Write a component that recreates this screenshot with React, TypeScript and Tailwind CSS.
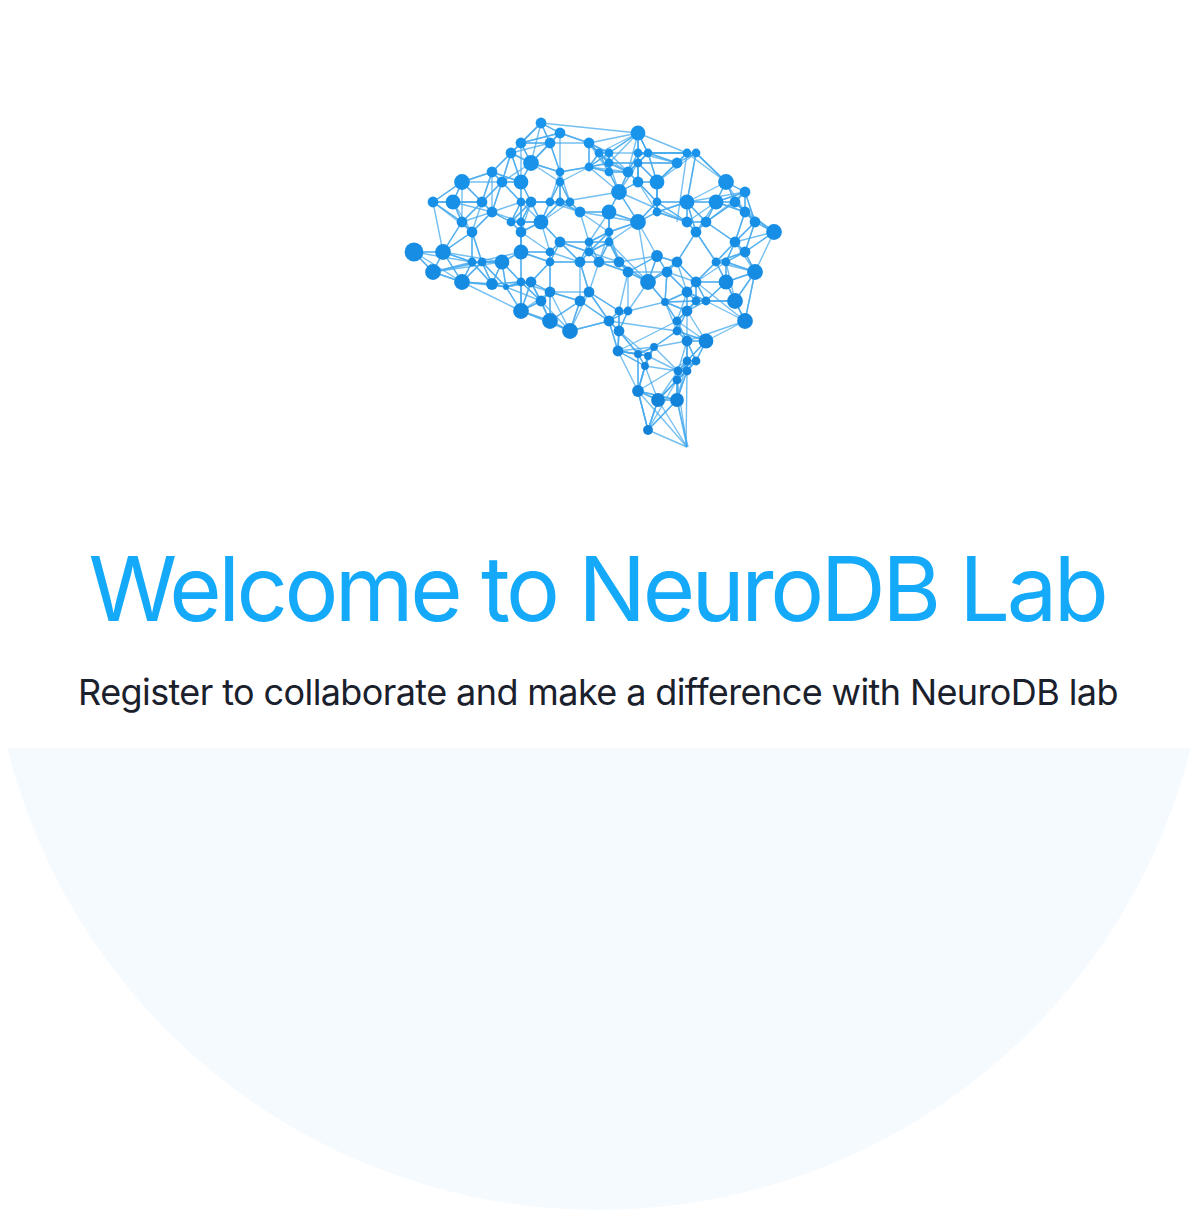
const nodes: number[][] = [
  [541,123,5],[560,133,5],[521,143,5],[550,143,5],[589,143,5],[511,153,5],[531,163,7.5],[589,167,4],[492,172,5],[560,172,4],
  [462,182,7.5],[502,182,5],[521,182,7],[560,182,4],[433,202,5],[453,202,7],[482,202,5],[521,202,4],[531,202,5],[550,202,4],
  [560,202,4],[570,202,4],[580,212,5],[492,212,5],[462,222,5],[511,222,4],[521,222,4],[541,222,7],
  [638,133,7],[599,153,4],[609,153,4],[638,153,4],[648,153,4],[687,153,4],[696,153,4],[677,163,5],[609,163,4],[638,163,4],
  [609,172,4],[628,172,5],[638,182,5],[657,182,7],[726,182,7.5],[745,192,5],[619,192,7.5],[657,202,4],[687,202,7],[716,202,7],
  [735,202,5],[609,212,7],[638,222,7.5],[657,212,4],[745,212,5],[687,222,5],[706,222,5],[755,222,5],[774,232,7.5],
  [414,252,9],[443,252,7.5],[433,272,7.5],[462,282,7.5],[472,232,5],[472,262,4],[482,262,4],[502,262,7],[521,252,7],[521,232,5],
  [492,284,5.5],[506,287,2.5],[521,282,4],[531,282,5],[550,252,4],[550,262,4],[560,242,5],[589,242,4],[589,252,4],[580,262,5],
  [599,262,5],[550,292,5],[541,301,5],[589,292,5],[580,301,5],[521,311,7.5],[550,321,7.5],[570,331,7.5],
  [609,232,4],[696,232,5],[735,242,5],[609,242,4],[745,252,5],[657,256,5.5],[619,262,5],[677,262,5],[716,262,4],[726,262,4],
  [628,272,5],[667,272,5],[755,272,7.5],[648,282,7.5],[696,282,5],[726,282,7],[687,292,5],[735,301,7.5],[665,302,3.5],[696,301,4],
  [706,301,4],[687,311,5],[619,311,4],[628,311,4],[745,321,7.5],[609,321,5],[677,321,4],[619,331,5],[677,331,4],[687,341,5],
  [706,341,7],[618,351,5],[638,354,3.5],[648,356,3.5],[654,347,3.5],[645,366,3.5],[687,361,4],[696,361,4],[678,371,4],[687,371,4],
  [677,380,4],[638,391,5.5],[658,400,6.5],[677,400,6.5],[648,430,4.5],
]

// joins every node to its nearest neighbours, the long ones are listed below
const near: number[][] = []
nodes.forEach((a, i) => {
  nodes
    .map((b, j) => ({ j, d: Math.hypot(a[0] - b[0], a[1] - b[1]) }))
    .filter((o) => o.j !== i && o.d < 52)
    .sort((x, y) => x.d - y.d)
    .slice(0, 6)
    .forEach((o) => near.push([a[0], a[1], nodes[o.j][0], nodes[o.j][1]]))
})

const extra: number[][] = [
  [541,123,638,133],[589,143,638,133],[609,153,638,133],[599,153,638,133],[648,153,638,133],[638,133,687,153],
  [638,153,687,153],[609,163,677,163],[589,167,628,172],[658,400,687,447],[677,400,687,447],[677,400,688,447],
  [648,430,687,447],[638,391,687,447],[677,380,687,447],[687,371,686,447],[638,391,648,430],[658,400,648,430],
  [677,400,648,430],[677,380,648,430],[618,351,638,391],[570,331,609,321],[521,311,570,331],[687,153,677,222],
  [696,153,687,202],[696,153,726,182],[687,202,745,192],[619,192,638,222],[580,212,638,222],[414,252,472,262],
  [414,252,462,282],[433,272,521,252],[462,282,521,311],[745,321,687,341],[755,272,745,321],[638,391,687,361],
  [658,400,696,361],[589,167,619,192],[560,202,619,192],[619,192,687,222],[638,222,648,282],[521,252,521,311],
  [433,272,502,262],[443,252,502,262],[609,242,648,282],[696,282,745,321],[609,321,677,331],[618,351,677,321],
]

export default function App() {
  return (
    <div className="h-[1210px] overflow-hidden bg-white font-['Inter',sans-serif]">
      <div className="-mt-2.5 -ml-[11px] flex h-[1220px] w-[1220px] flex-col overflow-hidden rounded-full">
        <div className="flex h-[758px] flex-col items-center bg-white pt-[125px]">
          <svg viewBox="409 115 380 335" className="h-[335px] w-[380px] shrink-0 overflow-visible blur-[0.4px]" fill="none">
            <defs>
              <linearGradient id="brain" gradientUnits="userSpaceOnUse" x1="0" y1="115" x2="0" y2="450">
                <stop offset="0" stopColor="#1a96ee" />
                <stop offset="1" stopColor="#1280d6" />
              </linearGradient>
            </defs>
            <g stroke="#45a9ee" strokeWidth="1.4" strokeOpacity="0.75">
              {near.concat(extra).map((l, i) => (
                <line key={i} x1={l[0]} y1={l[1]} x2={l[2]} y2={l[3]} />
              ))}
            </g>
            <g fill="url(#brain)">
              {nodes.map((n, i) => (
                <circle key={i} cx={n[0]} cy={n[1]} r={n[2] + 0.4} />
              ))}
            </g>
          </svg>
          <h1 className="mt-[85px] -ml-[4px] text-[90px] leading-[108px] font-normal tracking-[-3.5px] whitespace-nowrap text-[#14a9f9]">
            Welcome to NeuroDB Lab
          </h1>
          <p className="mt-[22px] -ml-[2px] text-[36px] leading-[54px] tracking-[-0.6px] whitespace-nowrap text-[#1a202c]">
            Register to collaborate and make a difference with NeuroDB lab
          </p>
        </div>
        <div className="flex-1 bg-[#f5faff]" />
      </div>
    </div>
  )
}
